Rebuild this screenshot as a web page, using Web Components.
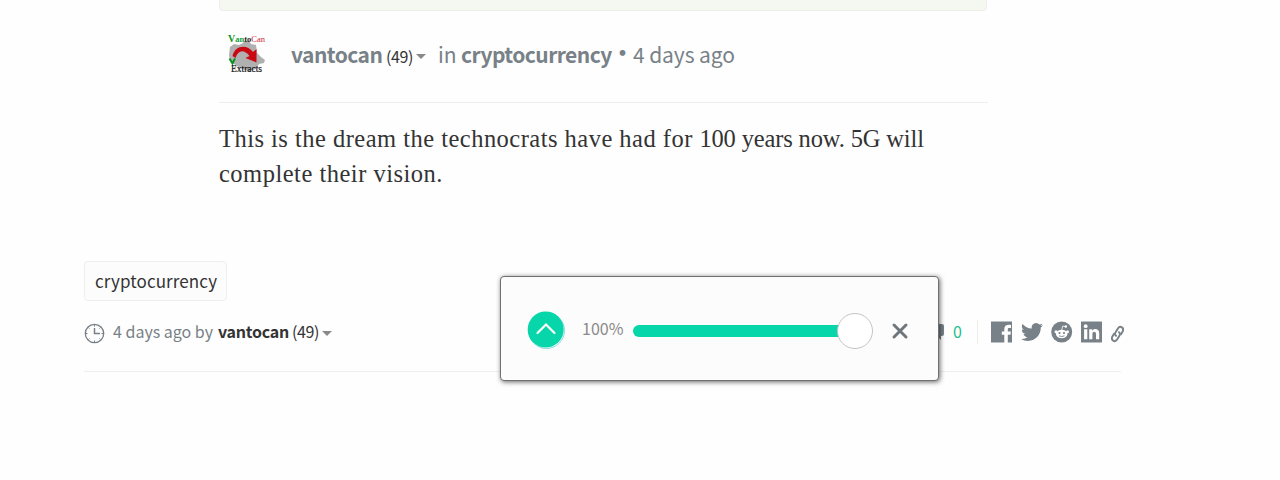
<!DOCTYPE html>
<html lang="en">
<head>
<meta charset="utf-8">
<title>Post</title>
<style>
    body {
        margin: 0;
        background: #fefefe;
        font-family: 'Noto Sans CJK SC', 'Noto Sans', sans-serif;
        color: #333;
        overflow: hidden;
    }
</style>
</head>
<body>
<post-page>
    <post-article slot="article">
        <user-avatar slot="avatar"></user-avatar>
        <span slot="author">vantocan</span>
        <span slot="category">cryptocurrency</span>
        <span slot="time">4 days ago</span>
        This is the dream the technocrats have had for <span class="tight">100 years now. 5G will</span><br><span class="last">complete their vision.</span>
    </post-article>
    <post-footer slot="footer">
        <tag-chip slot="tags">cryptocurrency</tag-chip>
        <share-menu slot="share"></share-menu>
        <vote-popup slot="vote">100%</vote-popup>
    </post-footer>
</post-page>

<script>
class PostPage extends HTMLElement {
    connectedCallback() {
        this.attachShadow({ mode: 'open' });
        this.shadowRoot.innerHTML = `
            <style>
                :host {
                    display: flex;
                    flex-direction: column;
                    height: 480px;
                }
                .article {
                    width: 769px;
                    margin-left: 219px;
                    height: 261px;
                }
                .footer {
                    width: 1037px;
                    margin-left: 84px;
                }
            </style>
            <div class="article"><slot name="article"></slot></div>
            <div class="footer"><slot name="footer"></slot></div>
        `;
    }
}

class CaretDown extends HTMLElement {
    connectedCallback() {
        this.attachShadow({ mode: 'open' });
        this.shadowRoot.innerHTML = `
            <style>
                :host {
                    display: block;
                    flex: none;
                    border: 5px solid transparent;
                    border-top-color: #8a8a8a;
                    border-bottom: 0;
                }
            </style>
        `;
    }
}

class UserAvatar extends HTMLElement {
    connectedCallback() {
        this.attachShadow({ mode: 'open' });
        this.shadowRoot.innerHTML = `
            <style>
                :host { display: block; width: 40px; height: 42px; }
                svg { display: block; }
                text { font-family: 'Liberation Serif', serif; }
            </style>
            <svg width="40" height="42" viewBox="0 0 40 42">
                <path fill="#b0b0b0" d="M17 8h5l2 3 5 1 1 8 4 4 4 3-1 3-5 1-3 5-7 2-7-2-5-3-7-5-1-6 1-8 4-3 5 1 4-2z"/>
                <path fill="#c90812" d="M5.500 23C8 12 20 11 26 19l3.500-3v13.500L18.500 25l4-2C17 16 11 17 8.500 25z"/>
                <text x="1" y="8.500" font-size="9" font-weight="bold" textLength="37" lengthAdjust="spacingAndGlyphs"><tspan fill="#089321" font-size="10.500">V</tspan><tspan fill="#16a03c">an</tspan><tspan fill="#222">to</tspan><tspan fill="#d3243a" font-weight="normal">Can</tspan></text>
                <path fill="none" stroke="#089321" stroke-width="2" d="M2.500 25.500l3 5 2.500-5"/>
                <text x="4" y="38.500" font-size="9.500" fill="#111" stroke="#111" stroke-width=".2" textLength="31" lengthAdjust="spacingAndGlyphs">Extracts</text>
            </svg>
        `;
    }
}

class PostArticle extends HTMLElement {
    connectedCallback() {
        this.attachShadow({ mode: 'open' });
        this.shadowRoot.innerHTML = `
            <style>
                :host { display: block; }
                .banner {
                    box-sizing: border-box;
                    width: 768px;
                    height: 11px;
                    background: #f4f8f1;
                    border: 1px solid #edf0ea;
                    border-top: 0;
                    border-radius: 0 0 4px 4px;
                }
                header {
                    box-sizing: border-box;
                    height: 92px;
                    padding: 22px 0 0 8px;
                    border-bottom: 1px solid #eee;
                    display: flex;
                    align-items: flex-start;
                }
                .meta {
                    display: flex;
                    align-items: baseline;
                    margin-left: 24px;
                    font-size: 21px;
                    line-height: 42px;
                    letter-spacing: -.1px;
                    color: #788187;
                    white-space: nowrap;
                }
                .bold { font-weight: 700; letter-spacing: -.55px; }
                .rep { font-size: 16px; letter-spacing: -.4px; color: #333; margin-left: 4px; width: 27px; }
                .in { margin-left: 12px; width: 23px; }
                caret-down { align-self: center; margin: 2px 0 0 3px; }
                .author { width: 91px; }
                .category { width: 152px; }
                .dot { width: 24px; margin-left: -4px; font-size: 27px; line-height: 30px; }
                p {
                    margin: 18px 0 0;
                    font: 24.500px/35px 'Liberation Serif', serif;
                    letter-spacing: .48px;
                    white-space: nowrap;
                    color: #333;
                }
                ::slotted(.tight) { letter-spacing: -.15px; }
                ::slotted(.last) { letter-spacing: .5px; }
            </style>
            <div class="banner"></div>
            <header>
                <slot name="avatar"></slot>
                <div class="meta">
                    <span class="bold author"><slot name="author"></slot></span>
                    <span class="rep">(49)</span>
                    <caret-down></caret-down>
                    <span class="in">in</span>
                    <span class="bold category"><slot name="category"></slot></span>
                    <span class="dot">•</span>
                    <slot name="time"></slot>
                </div>
            </header>
            <p><slot></slot></p>
        `;
    }
}

class TagChip extends HTMLElement {
    connectedCallback() {
        this.attachShadow({ mode: 'open' });
        this.shadowRoot.innerHTML = `
            <style>
                :host {
                    display: block;
                    box-sizing: border-box;
                    width: 143px;
                    height: 40px;
                    padding-left: 10px;
                    border: 1px solid #eee;
                    border-radius: 4px;
                    background: #fcfcfc;
                    font-size: 17px;
                    line-height: 38px;
                    letter-spacing: .1px;
                }
            </style>
            <slot></slot>
        `;
    }
}

class PostFooter extends HTMLElement {
    connectedCallback() {
        this.attachShadow({ mode: 'open' });
        this.shadowRoot.innerHTML = `
            <style>
                :host {
                    display: block;
                    position: relative;
                    height: 110px;
                    border-bottom: 1px solid #eee;
                }
                .row {
                    display: flex;
                    justify-content: space-between;
                    align-items: center;
                    height: 40px;
                    margin-top: 11px;
                    width: 1040px;
                }
                .info {
                    display: flex;
                    align-items: center;
                    font-size: 16px;
                    line-height: 24px;
                    color: #788187;
                    white-space: nowrap;
                }
                svg { margin: 2px 8px 0 0; }
                span, b { padding-bottom: 2px; }
                .time { width: 105px; }
                b { color: #333; width: 71px; letter-spacing: -.25px; }
                .rep { color: #333; margin: 0 3px; width: 27px; letter-spacing: -.4px; }
                caret-down { margin-top: 2px; }
            </style>
            <slot name="tags"></slot>
            <div class="row">
                <div class="info">
                    <svg width="21" height="21" viewBox="0 0 21 21" fill="none" stroke="#788187">
                        <circle cx="10.500" cy="10.500" r="9.200" stroke-width="1.300"/>
                        <path stroke-width="1.500" d="M10.500 5v5.500H16"/>
                        <path d="M10.500 1.500v2M10.500 17.500v2M1.500 10.500h2M17.500 10.500h2M4.500 4.500l1 1M15.500 15.500l1 1M4.500 16.500l1-1M15.500 5.500l1-1"/>
                    </svg>
                    <span class="time">4 days ago by</span>
                    <b>vantocan</b>
                    <span class="rep">(49)</span>
                    <caret-down></caret-down>
                </div>
                <slot name="share"></slot>
            </div>
            <slot name="vote"></slot>
        `;
    }
}

class ShareMenu extends HTMLElement {
    connectedCallback() {
        this.attachShadow({ mode: 'open' });
        this.shadowRoot.innerHTML = `
            <style>
                :host { display: flex; align-items: center; }
                svg { display: block; fill: #788187; }
                .count { margin-left: 9px; padding-bottom: 2px; width: 24px; color: #1fbf8f; font-size: 16px; line-height: 24px; }
                .icons {
                    display: flex;
                    align-items: center;
                    gap: 8px;
                    height: 24px;
                    padding-left: 13px;
                    border-left: 1px solid #eee;
                }
            </style>
            <svg width="18" height="18" viewBox="0 0 18 18"><path d="M2 1h14q2 0 2 2v8q0 2-2 2h-1v4l-4-4H2q-2 0-2-2V3q0-2 2-2z"/></svg>
            <span class="count">0</span>
            <div class="icons">
                <svg width="22" height="22" viewBox="0 0 22 22"><path d="M0 .500h21v21H16.800v-7.700h2.700l.4-3.300h-3.100V8.600c0-1.200.4-1.600 1.700-1.600h1.500V3.900c-4.300-.7-6.700.7-6.700 4.300v2.300h-2.500v3.300h2.500v7.700H0z"/></svg>
                <svg width="22" height="22" viewBox="0 0 24 24"><path d="M23.953 4.570a10 10 0 01-2.825.775 4.958 4.958 0 002.163-2.723c-.951.555-2.005.959-3.127 1.184a4.920 4.920 0 00-8.384 4.482C7.690 8.095 4.067 6.130 1.640 3.162a4.822 4.822 0 00-.666 2.475c0 1.710.870 3.213 2.188 4.096a4.904 4.904 0 01-2.228-.616v.06a4.923 4.923 0 003.946 4.827 4.996 4.996 0 01-2.212.085 4.936 4.936 0 004.604 3.417 9.867 9.867 0 01-6.102 2.105c-.39 0-.779-.023-1.170-.067a13.995 13.995 0 007.557 2.209c9.053 0 13.998-7.496 13.998-13.985 0-.21 0-.42-.015-.63A9.935 9.935 0 0024 4.590z"/></svg>
                <svg width="22" height="22" viewBox="0 0 22 22">
                    <circle cx="10.700" cy="11" r="10.500"/>
                    <g fill="#fff">
                        <ellipse cx="10.700" cy="13" rx="5.800" ry="4.200"/>
                        <circle cx="5" cy="10.700" r="1.500"/>
                        <circle cx="16.500" cy="10.700" r="1.500"/>
                        <circle cx="14.800" cy="5.500" r="1.200"/>
                    </g>
                    <path fill="none" stroke="#fff" stroke-width=".8" d="M10.700 9l1-4 3 .8"/>
                    <circle cx="8.500" cy="12" r="1.100"/>
                    <circle cx="13" cy="12" r="1.100"/>
                    <path fill="none" stroke="#788187" stroke-width=".9" d="M8 14.800q2.700 1.500 5.400 0"/>
                </svg>
                <svg width="22" height="22" viewBox="0 0 22 22">
                    <rect y=".5" width="21" height="21" rx=".5"/>
                    <g fill="#fff">
                        <circle cx="4.700" cy="5.200" r="1.900"/>
                        <path d="M3.100 8.300h3.200v10H3.100zM8.200 8.300h3v1.400c1.500-2.600 7-2.400 7 2.400v6.200H15v-5.400c0-3.100-3.600-2.900-3.600 0v5.400H8.200z"/>
                    </g>
                </svg>
                <svg width="13" height="18" viewBox="0 0 13 18" style="margin-top:3px">
                    <g fill="none" stroke="#788187" stroke-width="1.900" stroke-linecap="round">
                        <path d="M5 10.800C3.600 9.700 3.800 8.400 4.600 7.200l2.300-3.700c2.200-3.400 6.700-.6 4.700 3L10 9.200"/>
                        <path d="M8 7.200c1.400 1.100 1.200 2.400.4 3.600l-2.300 3.700c-2.200 3.400-6.700.6-4.700-3L3 8.800"/>
                    </g>
                </svg>
            </div>
        `;
    }
}

class VotePopup extends HTMLElement {
    connectedCallback() {
        this.attachShadow({ mode: 'open' });
        this.shadowRoot.innerHTML = `
            <style>
                :host {
                    box-sizing: border-box;
                    position: absolute;
                    left: 416px;
                    top: 15px;
                    width: 439px;
                    height: 105px;
                    padding: 0 29px 0 26px;
                    display: flex;
                    align-items: center;
                    background: #fcfcfc;
                    border: 1px solid #707070;
                    border-radius: 4px;
                    box-shadow: 1px 1px 5px rgba(0, 0, 0, .6);
                    font-size: 16px;
                    line-height: 24px;
                    color: #8a8a8a;
                }
                svg { display: block; flex: none; }
                .weight { width: 42px; margin: 0 9px 2px 17px; }
                .slider {
                    flex: none;
                    width: 240px;
                    height: 36px;
                    margin-top: 5px;
                    display: flex;
                    align-items: center;
                }
                .fill {
                    width: 210px;
                    height: 12px;
                    border-radius: 6px 0 0 6px;
                    background: #06d6a9;
                }
                .handle {
                    box-sizing: border-box;
                    width: 36px;
                    height: 36px;
                    margin-left: -6px;
                    border: 1px solid #c4c4c4;
                    border-radius: 50%;
                    background: #fff;
                }
                .close { margin: 5px 0 0 18px; }
            </style>
            <svg width="38" height="38" viewBox="0 0 38 38" style="margin-top:3px">
                <circle cx="19.500" cy="19.500" r="18" fill="#fff" stroke="#8bd9e4"/>
                <circle cx="18.700" cy="18.500" r="18" fill="#06d6a9"/>
                <path d="M10.500 22l8.500-8.500 8.500 8.500" fill="none" stroke="#fff" stroke-width="2.200" stroke-linecap="round"/>
            </svg>
            <span class="weight"><slot></slot></span>
            <div class="slider"><div class="fill"></div><div class="handle"></div></div>
            <svg class="close" width="18" height="18" viewBox="0 0 18 18"><path d="M3 3l12 12M15 3L3 15" stroke="#70777c" stroke-width="3" stroke-linecap="round"/></svg>
        `;
    }
}

customElements.define('caret-down', CaretDown);
customElements.define('user-avatar', UserAvatar);
customElements.define('share-menu', ShareMenu);
customElements.define('vote-popup', VotePopup);
customElements.define('tag-chip', TagChip);
customElements.define('post-article', PostArticle);
customElements.define('post-footer', PostFooter);
customElements.define('post-page', PostPage);
</script>
</body>
</html>
